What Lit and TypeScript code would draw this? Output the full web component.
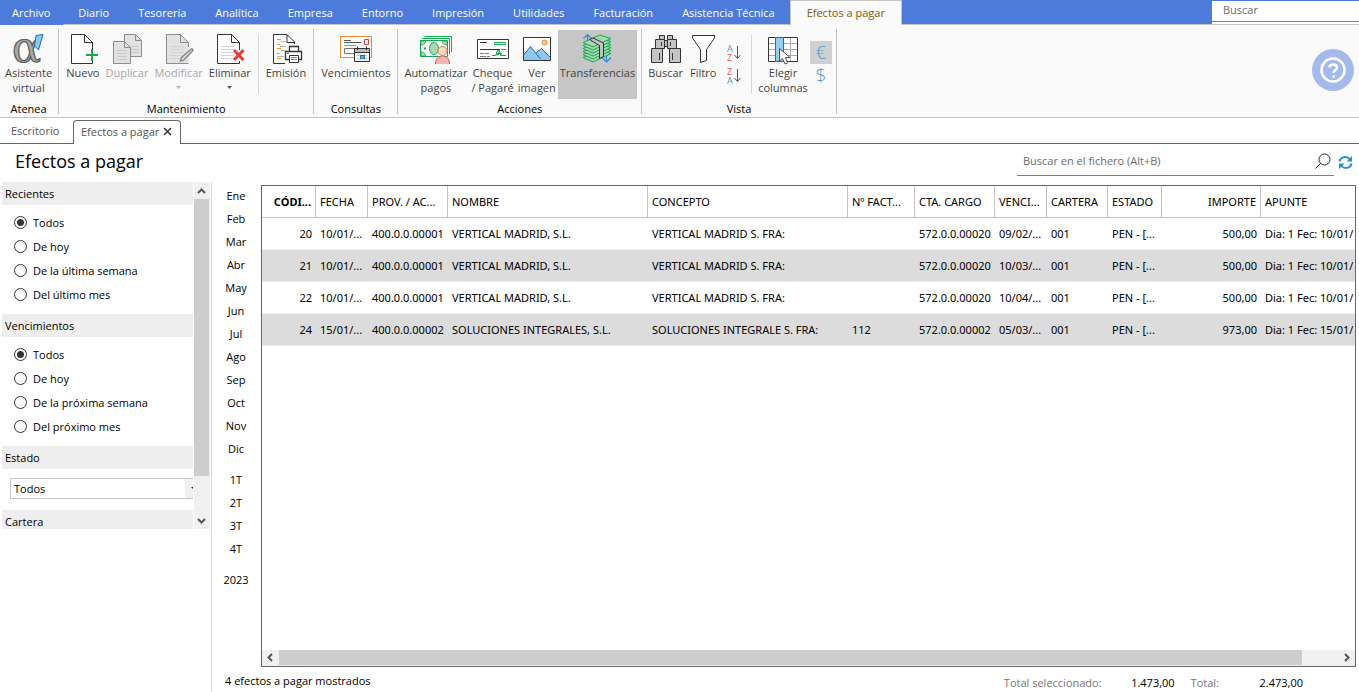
import { LitElement, html, css, svg, nothing, type TemplateResult } from "lit";
import { customElement, property, state } from "lit/decorators.js";
import { classMap } from "lit/directives/class-map.js";

type Icon = ReturnType<typeof svg>;

const pageLines = (x: number, w: number) =>
  svg`<path d="M${x} 12.5h${w}M${x} 15.5h${w}M${x} 18.5h${w}M${x} 21.5h${w}M${x} 24.5h${w}" stroke="#d4d4d4" fill="none"/>`;

const ICONS: Record<string, Icon> = {
  asistente: svg`
    <text x="-1" y="28" font-family="DejaVu Serif, serif" font-size="43" fill="#a9a9a9" stroke="#5a5a5a" stroke-width="1.2">α</text>
    <path d="M23 1.5L30 .5L25.5 16L21.5 12Z" fill="#8cc8f0" stroke="#1673b8"/>`,
  nuevo: svg`
    <path d="M25.5 15V8.5L17.5 .5H4.5V29.5H25.5V26" fill="#fff" stroke="#333"/>
    <path d="M17.5 .5V8.5H25.5" fill="none" stroke="#333"/>
    <path d="M19 21H31M25 15V27" stroke="#14a850" stroke-width="2"/>`,
  duplicar: svg`
    <path d="M13.5 .5H24.5L30.5 6.5V22.5H13.5Z" fill="#e2e2e2" stroke="#8c8c8c"/>
    <path d="M24.5 .5V6.5H30.5" fill="none" stroke="#8c8c8c"/>
    <path d="M20 12.5h8M20 15.5h8M20 18.5h8" stroke="#c8c8c8"/>
    <path d="M2.5 7.5H13.5L19.5 13.5V29.5H2.5Z" fill="#e2e2e2" stroke="#8c8c8c"/>
    <path d="M13.5 7.5V13.5H19.5" fill="none" stroke="#8c8c8c"/>
    <path d="M6 16.5h10M6 19.5h10M6 22.5h10M6 25.5h10" stroke="#c8c8c8"/>`,
  modificar: svg`
    <path d="M25.5 13V8.5L17.5 .5H3.5V29.5H25.5V25" fill="#e2e2e2"/>
    <path d="M25.5 13V8.5L17.5 .5H3.5V29.5H25.5M17.5 .5V8.5H25.5" fill="none" stroke="#8c8c8c"/>
    ${pageLines(7, 14)}
    <path d="M17.5 27L18.5 23.5L28 15Q30 14.5 30 16.5L21 26Z" fill="#d8d8d8" stroke="#808080" stroke-width="1.3"/>`,
  eliminar: svg`
    <path d="M25.5 16V8.5L17.5 .5H3.5V29.5H25.5V27" fill="#fff" stroke="#333"/>
    <path d="M17.5 .5V8.5H25.5" fill="none" stroke="#333"/>
    ${pageLines(7, 13)}
    <path d="M20 16L29.5 26M29.5 16L20 26" stroke="#ee3a37" stroke-width="3"/>`,
  emision: svg`
    <path d="M24.5 10V8L17 .5H3.5V29.5H15" fill="#fff" stroke="#333"/>
    <path d="M17 .5V8.5H25" fill="none" stroke="#333"/>
    <path d="M7 5.5h4M7 10.5h3M7 14.5h4M7 19.5h3M7 24.5h4" stroke="#f0922e"/>
    <path d="M11 7.5h5M10 12.5h6M11 16.5h4M7 22.5h7" stroke="#b4b4b4"/>
    <path d="M19.5 12.5H28.5V17.5H19.5ZM15.5 17.5H31.5V25.5H15.5Z" fill="#fff" stroke="#333" stroke-width="1.3"/>
    <path d="M19.5 21.5H28.5V28.5H19.5Z" fill="#fff" stroke="#333"/>
    <path d="M21 23.5h6M21 25.5h6" stroke="#888"/><path d="M17 19.5h2" stroke="#1673b8"/>`,
  vencimientos: svg`
    <path d="M.5 2.5H31.5V23.5H.5Z" fill="#fff" stroke="#f0862a"/>
    <path d="M4 6.5h7M4 8.5h17" stroke="#555"/><path d="M4 11.5h12" stroke="#999"/>
    <path d="M4.5 14.5H15V19.5H4.5Z" fill="none" stroke="#777"/>
    <path d="M24.5 5.5H28.5V10.5H24.5Z" fill="#fff" stroke="#e83c3c"/>
    <path d="M14.5 14.5H29.5V27.5H14.5Z" fill="#fff" stroke="#333"/>
    <path d="M15 15H29V18H15Z" fill="#bdbdbd"/><path d="M14.5 18.5H29.5M17.5 12.5V16M26.5 12.5V16" stroke="#333"/>
    <path d="M17 21.5h10M17 24.5h10M20.5 20V26M24.5 20V26" stroke="#c4c4c4"/>
    <path d="M20.5 21.5H24.5V24.5H20.5Z" fill="#5fb0e8" stroke="#1673b8"/>`,
  automatizar: svg`
    <path d="M4.5 2.5H31.5V18M2.5 4.5H29.5V20" fill="none" stroke="#14a850"/>
    <path d="M.5 6.5H27.5V22.5H.5Z" fill="#fff" stroke="#14a850"/>
    <path d="M1 7H6Q5.5 10.5 1 11.5ZM27 7H22Q22.5 10.5 27 11.5ZM1 22H6Q5.5 18.5 1 17.5Z" fill="#a6dcb6" stroke="#14a850" stroke-width=".7"/>
    <ellipse cx="14" cy="14.5" rx="4.5" ry="6" fill="#a6d9b4" stroke="#14a850"/>
    <path d="M4 14.5h2" stroke="#14a850" stroke-width="2"/>
    <path d="M15.500 30C15.500 24.500 18.500 22 22.500 22S29.500 24.500 29.500 30Z" fill="#f3b6b4"/>
    <path d="M15.500 30C15.500 24.500 18.500 22 22.500 22S29.500 24.500 29.500 30" fill="none" stroke="#e8484c"/>
    <circle cx="22.5" cy="17" r="4.5" fill="#fbdcc0" stroke="#c98a5c"/>`,
  cheque: svg`
    <path d="M.5 5.5H31.5V24.5H.5Z" fill="#fff" stroke="#333"/>
    <path d="M17.5 8.5H28.5V10.5H17.5Z" fill="#fff" stroke="#14a850"/>
    <path d="M3 8.5h7M3 15.5h20" stroke="#333"/>
    <path d="M24 15.5h5M3 19.5h4M8 19.5h4M3 22.5h6M10 22.5h3" stroke="#777"/>
    <path d="M15 21.5H18C21 20.5 23.5 17 22 16.5S18.5 19.5 20 20.5S23 18.5 24 19S22.5 21.5 24 21.5H29" fill="none" stroke="#14a850" stroke-width="1.2"/>`,
  imagen: svg`
    <path d="M2.5 3.5H29.5V26.5H2.5Z" fill="#fff"/>
    <path d="M3 20.5L9.5 12.5L15 19L20.5 14.5L29 23V26H3Z" fill="#8fc6ee"/>
    <path d="M3 20.5L9.5 12.5L19.5 25M15 19L20.5 14.5L29 23" fill="none" stroke="#1673b8"/>
    <circle cx="23.5" cy="8.5" r="2.5" fill="#fbc9a0" stroke="#f0862a"/>
    <path d="M2.5 3.5H29.5V26.5H2.5Z" fill="none" stroke="#333"/>`,
  transferencias: svg`
    <path d="M6.5 .5V10M2.5 4.5L6.5 .5L10.5 4.5M25.5 14V28M21 23.5L25.5 28L30 23.5" fill="none" stroke="#2a8ad4" stroke-width="1.2"/>
    ${[15, 12, 9, 6, 3, 0].map(
      (d) => svg`<path d="M2 ${8.5 + d}L19 ${1 + d}L30 ${4.5 + d}L12 ${13 + d}Z" fill="#a4d8b0" stroke="#14a850"/>`
    )}
    <path d="M8.500 5.500L12 4L22.500 9V22.500L18.500 24.500V11.500Z" fill="#c2c2c2" stroke="#333"/>`,
  buscar: svg`
    <path d="M14 6.5H18V12.5H14Z" fill="#bdbdbd" stroke="#333"/>
    <path d="M9.5 1.5H14.5V5.5H9.5ZM17.5 1.5H22.5V5.5H17.5ZM5.5 5.5H14.5V14.5H5.5ZM17.5 5.5H26.5V14.5H17.5ZM1.5 14.5H12.5V28.5H1.5ZM19.5 14.5H30.5V28.5H19.5Z" fill="#c4c4c2" stroke="#333"/>
    <path d="M9.5 19V26M22.5 19V26M11.5 8V12M20.5 8V12" stroke="#333"/>`,
  filtro: svg`<path d="M5.5 1.5H27.5V4L19.5 15.5V26.5L13.5 28.5V15.5L5.5 4Z" fill="#fff" stroke="#333"/>`,
  columnas: svg`
    <path d="M1.5 3.5H30.5V27.5H1.5Z" fill="#fff" stroke="#333"/>
    <path d="M2 9.5H30M2 15.5H30M2 21.5H30M16.5 4V27M23.5 4V27" stroke="#aaa"/>
    <path d="M8.5 3.5H16.5V27.5H8.5Z" fill="#93cdf2" stroke="#1673b8"/>
    <path d="M12.5 14.5V27L15.5 24.5L18 30L20.5 29L18.5 23.5H23Z" fill="#fff" stroke="#555"/>`,
};

interface Command { icon: string; lines: string[]; off?: boolean; on?: boolean; menu?: boolean }

@customElement("ribbon-button")
class RibbonButton extends LitElement {
  static styles = css`
    :host { display: block; }
    .cmd {
      display: flex; flex-direction: column; align-items: center; height: 69px; padding: 4px var(--cmd-pad, 3px) 0;
      border: 0; background: none; color: #444; font: 11px/15px "Open Sans", sans-serif; white-space: nowrap;
    }
    .off { color: #a6a6a6; }
    .on { background: #c6c6c6; }
    .ico { width: 32px; height: 32px; margin-bottom: -1px; overflow: visible; flex: none; }
    .arrow { width: 5px; height: 15px; }
  `;
  @property({ attribute: false }) cmd!: Command;
  render() {
    const c = this.cmd;
    return html`<button class=${classMap({ cmd: true, off: !!c.off, on: !!c.on })} ?disabled=${!!c.off}>
      <svg class="ico" viewBox="0 0 32 32" aria-hidden="true">${ICONS[c.icon]}</svg>
      ${c.lines.map((l) => html`<span>${l}</span>`)}
      ${c.menu ? html`<svg class="arrow" viewBox="0 0 5 15" aria-hidden="true"><path d="M0 6H5L2.5 9Z" fill=${c.off ? "#b4b4b4" : "#555"}/></svg>` : nothing}
    </button>`;
  }
}

interface Column { title: string; width: number; right?: boolean; bold?: boolean }

const COLUMNS: Column[] = [
  { title: "CÓDI...", width: 54, right: true, bold: true },
  { title: "FECHA", width: 52 },
  { title: "PROV. / AC...", width: 80 },
  { title: "NOMBRE", width: 200 },
  { title: "CONCEPTO", width: 200 },
  { title: "Nº FACT...", width: 67 },
  { title: "CTA. CARGO", width: 80 },
  { title: "VENCI...", width: 52 },
  { title: "CARTERA", width: 61 },
  { title: "ESTADO", width: 54 },
  { title: "IMPORTE", width: 99, right: true },
  { title: "APUNTE", width: 200 },
];

const ROWS = [
  ["20", "10/01/...", "400.0.0.00001", "VERTICAL MADRID, S.L.", "VERTICAL MADRID S. FRA:", "", "572.0.0.00020", "09/02/...", "001", "PEN - [...", "500,00", "Dia: 1 Fec: 10/01/"],
  ["21", "10/01/...", "400.0.0.00001", "VERTICAL MADRID, S.L.", "VERTICAL MADRID S. FRA:", "", "572.0.0.00020", "10/03/...", "001", "PEN - [...", "500,00", "Dia: 1 Fec: 10/01/"],
  ["22", "10/01/...", "400.0.0.00001", "VERTICAL MADRID, S.L.", "VERTICAL MADRID S. FRA:", "", "572.0.0.00020", "10/04/...", "001", "PEN - [...", "500,00", "Dia: 1 Fec: 10/01/"],
  ["24", "15/01/...", "400.0.0.00002", "SOLUCIONES INTEGRALES, S.L.", "SOLUCIONES INTEGRALE S. FRA:", "112", "572.0.0.00002", "05/03/...", "001", "PEN - [...", "973,00", "Dia: 1 Fec: 15/01/"],
];

@customElement("effects-grid")
class EffectsGrid extends LitElement {
  static styles = css`
    :host { display: flex; flex-direction: column; min-width: 0; border: 1px solid #666; background: #fff; overflow: hidden; }
    .view { flex: 1; overflow: hidden; }
    table { table-layout: fixed; width: max-content; min-width: 100%; border-collapse: separate; border-spacing: 0; font: 11px/16px "Noto Sans", "Open Sans", sans-serif; color: #000; }
    th, td { box-sizing: border-box; height: 32px; padding: 0 4px; text-align: left; font-weight: 400; white-space: nowrap; overflow: hidden; }
    th { border-right: 1px solid #c4c4c4; border-bottom: 1px solid #c4c4c4; }
    td { border-bottom: 1px solid #eee; }
    .alt td { background: #dcdcdc; }
    .right { text-align: right; }
    .bold { font-weight: 700; }
    .bar { display: flex; height: 16px; background: #f0f0f0; }
    .arrow { width: 17px; height: 16px; flex: none; border: 0; padding: 0; background: none; }
    .arrow svg { display: block; }
    .thumb { flex: 1023; margin-bottom: 1px; background: #cdcdcd; }
    .rest { flex: 36; }
  `;
  render() {
    return html`
      <div class="view">
        <table>
          <colgroup>${COLUMNS.map((c) => html`<col style="width:${c.width}px" />`)}</colgroup>
          <thead><tr>${COLUMNS.map((c) => html`<th scope="col" class=${classMap({ right: !!c.right, bold: !!c.bold })}>${c.title}</th>`)}</tr></thead>
          <tbody>
            ${ROWS.map((r, i) => html`<tr class=${classMap({ alt: i % 2 === 1 })}>
              ${r.map((v, j) => html`<td class=${classMap({ right: !!COLUMNS[j].right })}>${v}</td>`)}
            </tr>`)}
          </tbody>
        </table>
      </div>
      <div class="bar">
        <button class="arrow" aria-label="Izquierda"><svg width="17" height="16"><path d="M10 4L6.5 7.5L10 11" fill="none" stroke="#555" stroke-width="2"/></svg></button>
        <div class="thumb"></div><div class="rest"></div>
        <button class="arrow" aria-label="Derecha"><svg width="17" height="16"><path d="M7 4L10.5 7.5L7 11" fill="none" stroke="#555" stroke-width="2"/></svg></button>
      </div>`;
  }
}

@customElement("filter-panel")
class FilterPanel extends LitElement {
  static styles = css`
    :host { display: flex; height: 347px; padding-left: 2px; font: 11px/15px "Open Sans", sans-serif; color: #000; }
    .list { flex: 1; min-width: 0; overflow: hidden; }
    .head { display: block; margin: 0; padding: 0 3px; background: #eee; font: inherit; line-height: 23px; }
    fieldset { margin: 0; padding: 0; border: 0; min-width: 0; }
    legend { width: 100%; box-sizing: border-box; }
    .options { padding: 5px 0 8px 12px; }
    .opt { display: flex; align-items: center; gap: 6px; height: 24px; }
    .radio { appearance: none; box-sizing: border-box; width: 13px; height: 13px; margin: 0; border: 1px solid #333; border-radius: 50%; background: #fff; }
    .radio:checked { background: radial-gradient(circle, #333 3px, #fff 4px); }
    .combo { display: flex; position: relative; width: 194px; margin: 9px 0 11px 8px; }
    select { appearance: none; flex: 1; height: 21px; box-sizing: border-box; margin: 0; padding: 0 3px; border: 1px solid #c8c8c8; border-radius: 0; background: #fff; font: inherit; color: inherit; }
    .drop { position: absolute; top: 1px; right: 1px; width: 18px; height: 19px; background: #f0f0f0; pointer-events: none; }
    .bar { display: flex; flex-direction: column; width: 16px; margin-left: 1px; background: #f0f0f0; }
    .arrow { width: 16px; height: 17px; border: 0; padding: 0; background: none; }
    .arrow svg { display: block; }
    .thumb { flex: 277; margin-right: 1px; background: #cdcdcd; }
    .rest { flex: 36; }
  `;
  group(title: string, name: string, options: string[]) {
    return html`<fieldset>
      <legend class="head">${title}</legend>
      <div class="options">
        ${options.map((o, i) => html`<label class="opt"><input class="radio" type="radio" name=${name} ?checked=${i === 0} />${o}</label>`)}
      </div>
    </fieldset>`;
  }
  render() {
    return html`
      <div class="list">
        ${this.group("Recientes", "recientes", ["Todos", "De hoy", "De la última semana", "Del último mes"])}
        ${this.group("Vencimientos", "vencimientos", ["Todos", "De hoy", "De la próxima semana", "Del próximo mes"])}
        <label class="head" for="estado">Estado</label>
        <div class="combo">
          <select id="estado"><option>Todos</option></select>
          <svg class="drop" viewBox="0 0 18 19"><path d="M6 8H12L9 11Z" fill="#222"/></svg>
        </div>
        <h2 class="head">Cartera</h2>
      </div>
      <div class="bar">
        <button class="arrow" aria-label="Subir"><svg width="16" height="17"><path d="M4 11L7.5 7.5L11 11" fill="none" stroke="#555" stroke-width="2"/></svg></button>
        <div class="thumb"></div><div class="rest"></div>
        <button class="arrow" aria-label="Bajar"><svg width="16" height="17"><path d="M4 7L7.5 10.5L11 7" fill="none" stroke="#555" stroke-width="2"/></svg></button>
      </div>`;
  }
}

const MENUS = ["Archivo", "Diario", "Tesorería", "Analítica", "Empresa", "Entorno", "Impresión", "Utilidades", "Facturación", "Asistencia Técnica", "Efectos a pagar"];
const PERIODS = [
  ["Ene", "Feb", "Mar", "Abr", "May", "Jun", "Jul", "Ago", "Sep", "Oct", "Nov", "Dic"],
  ["1T", "2T", "3T", "4T"],
  ["2023"],
];

@customElement("app-root")
class AppRoot extends LitElement {
  static styles = css`
    :host { display: flex; flex-direction: column; min-height: 100vh; background: #fff; font: 11px/15px "Open Sans", sans-serif; color: #000; }
    button, input { font: inherit; }
    .menu { display: flex; height: 24px; background: #4d7bdb; border-bottom: 1px solid #c4c4c4; }
    .tab { height: 24px; padding: 1px 14px 0; border: 0; margin-right: 1px; background: none; color: #fff; line-height: 24px; white-space: nowrap; }
    .file { height: 25px; padding: 1px 13px 1px 12px; background: #4d7bdb; }
    .current { height: 25px; margin: 0; padding: 0 16px; border: 1px solid #c4c4c4; border-bottom: 0; background: #fafafa; color: #7d5a08; }
    .find { display: flex; width: 147px; height: 23px; margin: 1px 0 0 auto; background: #fff; }
    .find input { flex: 1; min-width: 0; height: 21px; box-sizing: border-box; padding: 0 11px 3px; border: 0; border-bottom: 1px solid #808080; background: none; }
    input::placeholder { color: #6e6e6e; opacity: 1; }

    .ribbon { display: flex; align-items: flex-start; padding: 4px 0 3px; background: #fafafa; border-bottom: 1px solid #c4c4c4; }
    .group { display: flex; flex-direction: column; height: 85px; box-sizing: border-box; padding: 1px 4px 0; border-right: 1px solid #c4c4c4; }
    .first { padding: 1px 3px 0 2px; }
    .tight { --cmd-pad: 2px; }
    .cmds { display: flex; }
    .name { margin: 2px 0 -2px; text-align: center; font: inherit; }
    .sep { width: 1px; height: 59px; margin: 5px 4px 0; background: #d8d8d8; }
    .sorts { display: flex; flex-direction: column; align-items: center; gap: 5px; width: 26px; padding-top: 14px; }
    .sorts button { width: 16px; height: 18px; border: 0; padding: 0; background: none; }
    .sorts svg { display: block; overflow: visible; }
    .coins { display: flex; flex-direction: column; padding-top: 11px; }
    .coins button { width: 22px; height: 23px; border: 0; padding: 0; background: none; color: #4a9cd6; font: 300 19px/21px "Open Sans", sans-serif; }
    .coins .on { background: #d0d0d0; }
    .help { width: 42px; height: 42px; margin: 20px 5px 0 auto; padding: 0; border: 0; border-radius: 50%; background: #a5baec; }
    .help svg { display: block; }

    .docs { display: flex; height: 25px; border-bottom: 1px solid #666; color: #555; }
    .doc { border: 0; margin: 0; padding: 0 11px; background: none; color: inherit; width: 73px; text-align: left; }
    .open { display: flex; align-items: center; gap: 4px; height: 24px; box-sizing: border-box; margin-top: 2px; padding: 0 8px 3px 7px; border: 1px solid #666; border-bottom: 0; border-radius: 4px 4px 0 0; background: #fff; }
    .close { width: 9px; height: 9px; border: 0; padding: 0; background: none; }
    .close svg { display: block; }

    .top { display: flex; align-items: flex-start; height: 38px; padding: 0 6px 0 15px; }
    .title { margin: 5px 0 0; font: 18px/25px "Open Sans", sans-serif; }
    .search { display: flex; align-items: center; width: 317px; height: 32px; box-sizing: border-box; margin-left: auto; padding: 2px 3px 0 6px; border-bottom: 1px solid #808080; }
    .search input { flex: 1; min-width: 0; padding: 0; border: 0; background: none; }
    .tool { border: 0; padding: 0; background: none; }
    .tool svg { display: block; }
    .reload { margin: 11px 0 0 4px; }

    .body { flex: 1; display: flex; }
    .side { width: 211px; flex: none; border-right: 1px solid #dcdcdc; }
    .side filter-panel { margin-right: 1px; }
    .main { flex: 1; min-width: 0; display: grid; grid-template: 1fr 25px / 49px 1fr; padding: 3px 3px 0 0; }
    .periods { display: flex; flex-direction: column; gap: 8px; }
    .set { display: flex; flex-direction: column; }
    .set button { height: 23px; border: 0; padding: 0 1px 2px 0; background: none; }
    .foot { grid-column: 1 / -1; display: flex; padding: 6px 53px 0 13px; }
    .sums { display: flex; gap: 16px; margin: 0 0 0 auto; padding-top: 2px; }
    .sum { display: flex; color: #767676; }
    .sum output { width: 73px; text-align: right; color: #000; }
    .total output { width: 84px; }
  `;

  @state() menus = MENUS;

  group(name: string, cls: string, content: TemplateResult) {
    return html`<section class="group ${cls}"><div class="cmds">${content}</div><h2 class="name">${name}</h2></section>`;
  }
  cmd(icon: string, lines: string[], extra: Partial<Command> = {}) {
    return html`<ribbon-button .cmd=${{ icon, lines, ...extra }}></ribbon-button>`;
  }
  sort(first: string, second: string, label: string) {
    const color = (l: string) => (l === "A" ? "#3c9ad8" : "#ee5a5a");
    return html`<button aria-label=${label}><svg width="16" height="18" viewBox="0 0 16 18">
      <text x="1" y="8" font-size="9" font-family="Open Sans, sans-serif" fill=${color(first)}>${first}</text>
      <text x="1" y="17" font-size="9" font-family="Open Sans, sans-serif" fill=${color(second)}>${second}</text>
      <path d="M11.5 2V14M8.5 11L11.5 14.5L14.5 11" fill="none" stroke="#555"/></svg></button>`;
  }

  render() {
    return html`
      <nav class="menu">
        ${this.menus.map((m, i) => html`<button class=${classMap({ tab: true, file: i === 0, current: i === this.menus.length - 1 })}>${m}</button>`)}
        <div class="find"><input type="search" placeholder="Buscar" aria-label="Buscar" /></div>
      </nav>
      <div class="ribbon">
        ${this.group("Atenea", "first", html`${this.cmd("asistente", ["Asistente", "virtual"])}`)}
        ${this.group("Mantenimiento", "", html`
          ${this.cmd("nuevo", ["Nuevo"])}
          ${this.cmd("duplicar", ["Duplicar"], { off: true })}
          ${this.cmd("modificar", ["Modificar"], { off: true, menu: true })}
          ${this.cmd("eliminar", ["Eliminar"], { menu: true })}
          <div class="sep"></div>
          ${this.cmd("emision", ["Emisión"])}`)}
        ${this.group("Consultas", "", html`${this.cmd("vencimientos", ["Vencimientos"])}`)}
        ${this.group("Acciones", "tight", html`
          ${this.cmd("automatizar", ["Automatizar", "pagos"])}
          ${this.cmd("cheque", ["Cheque", "/ Pagaré"])}
          ${this.cmd("imagen", ["Ver", "imagen"])}
          ${this.cmd("transferencias", ["Transferencias"], { on: true })}`)}
        ${this.group("Vista", "tight", html`
          ${this.cmd("buscar", ["Buscar"])}
          ${this.cmd("filtro", ["Filtro"])}
          <div class="sorts">${this.sort("A", "Z", "Orden ascendente")}${this.sort("Z", "A", "Orden descendente")}</div>
          <div class="sep"></div>
          ${this.cmd("columnas", ["Elegir", "columnas"])}
          <div class="coins"><button class="on">€</button><button>$</button></div>`)}
        <button class="help" aria-label="Ayuda">
          <svg width="42" height="42" viewBox="0 0 42 42" fill="none" stroke="#fff" stroke-width="2.5">
            <circle cx="21" cy="21" r="11.5"/><path d="M17.5 18.5C17.5 14.5 25 14.5 25 18.5C25 21 21.500 21 21.500 24"/><path d="M20.3 27.5h2.5"/>
          </svg>
        </button>
      </div>
      <nav class="docs">
        <button class="doc">Escritorio</button>
        <div class="open"><span>Efectos a pagar</span>
          <button class="close" aria-label="Cerrar"><svg width="9" height="9"><path d="M1 1L8 8M8 1L1 8" stroke="#333" stroke-width="1.5"/></svg></button>
        </div>
      </nav>
      <header class="top">
        <h1 class="title">Efectos a pagar</h1>
        <div class="search">
          <input type="text" placeholder="Buscar en el fichero (Alt+B)" aria-label="Buscar en el fichero" />
          <button class="tool" aria-label="Buscar"><svg width="16" height="16" fill="none" stroke="#222"><circle cx="9.5" cy="6.5" r="5.5"/><path d="M5.5 10.5L.5 15.5"/></svg></button>
        </div>
        <button class="tool reload" aria-label="Actualizar">
          <svg width="15" height="15" viewBox="0 0 15 15" fill="none" stroke="#2a8fd0" stroke-width="2">
            <path d="M1.5 6.5C2.5 1.5 9 .5 12 4.5M13.5 8.5C12.5 13.5 6 14.5 3 10.5"/>
            <path d="M14 1V6.5H8.5ZM1 14V8.5H6.5Z" fill="#2a8fd0" stroke="none"/>
          </svg>
        </button>
      </header>
      <div class="body">
        <aside class="side"><filter-panel></filter-panel></aside>
        <main class="main">
          <div class="periods">${PERIODS.map((s) => html`<div class="set">${s.map((p) => html`<button>${p}</button>`)}</div>`)}</div>
          <effects-grid></effects-grid>
          <footer class="foot">
            <span>4 efectos a pagar mostrados</span>
            <div class="sums">
              <label class="sum">Total seleccionado:<output>1.473,00</output></label>
              <label class="sum total">Total:<output>2.473,00</output></label>
            </div>
          </footer>
        </main>
      </div>`;
  }
}
